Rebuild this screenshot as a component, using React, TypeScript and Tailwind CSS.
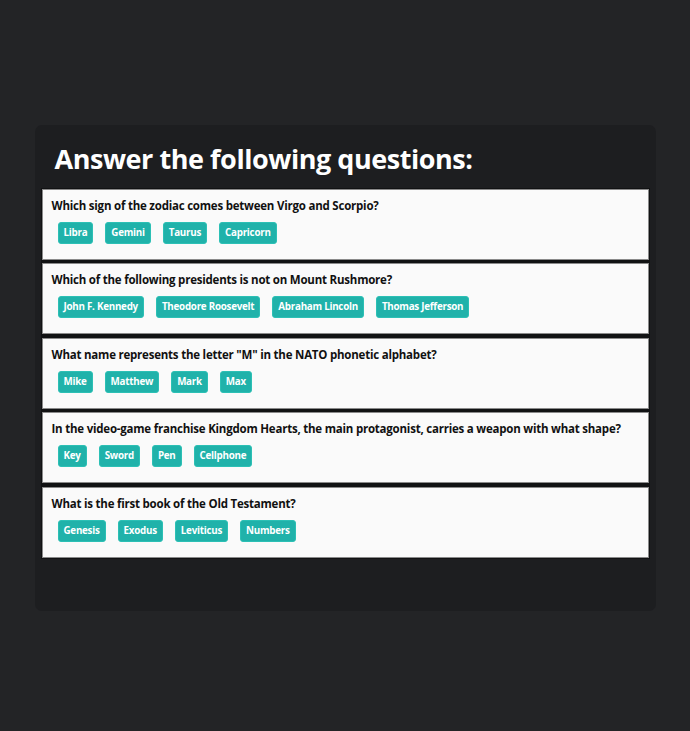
import React from "react";

const questions = [
  { q: "Which sign of the zodiac comes between Virgo and Scorpio?", a: ["Libra", "Gemini", "Taurus", "Capricorn"] },
  { q: "Which of the following presidents is not on Mount Rushmore?", a: ["John F. Kennedy", "Theodore Roosevelt", "Abraham Lincoln", "Thomas Jefferson"] },
  { q: 'What name represents the letter "M" in the NATO phonetic alphabet?', a: ["Mike", "Matthew", "Mark", "Max"] },
  { q: "In the video-game franchise Kingdom Hearts, the main protagonist, carries a weapon with what shape?", a: ["Key", "Sword", "Pen", "Cellphone"] },
  { q: "What is the first book of the Old Testament?", a: ["Genesis", "Exodus", "Leviticus", "Numbers"] },
];

export default function App() {
  return (
    <div
      className="min-h-[731px] w-full bg-[#232426] pt-[125px]"
      style={{ fontFamily: '"Open Sans", "Noto Sans", sans-serif' }}
    >
      <div className="mx-auto w-[621px] rounded-[7px] bg-[#1d1e20] pb-[52px]">
        <h1 className="px-[20px] pt-[17px] pb-[13px] text-[27px] leading-[33px] font-bold text-white tracking-[-0.45px]">
          Answer the following questions:
        </h1>
        <div className="mx-[6px] flex flex-col gap-[3.4px] bg-[#111213] p-[1px]">
          {questions.map((item, i) => (
            <div key={i} className="h-[71px] border border-[#8a8a8a] bg-[#fafafa] px-[9px] pt-[7px]">
              <div className="text-[11.5px] leading-[18px] font-bold text-[#111] tracking-[-0.22px]">{item.q}</div>
              <div className="mt-[7px] flex gap-[12px] pl-[6px]">
                {item.a.map((ans) => (
                  <button
                    key={ans}
                    className="h-[22px] rounded-[3px] border border-[#2cc0b5] bg-[#20b2aa] px-[5px] text-[9.8px] leading-[20px] font-bold text-white tracking-[-0.25px]"
                  >
                    {ans}
                  </button>
                ))}
              </div>
            </div>
          ))}
        </div>
      </div>
    </div>
  );
}
